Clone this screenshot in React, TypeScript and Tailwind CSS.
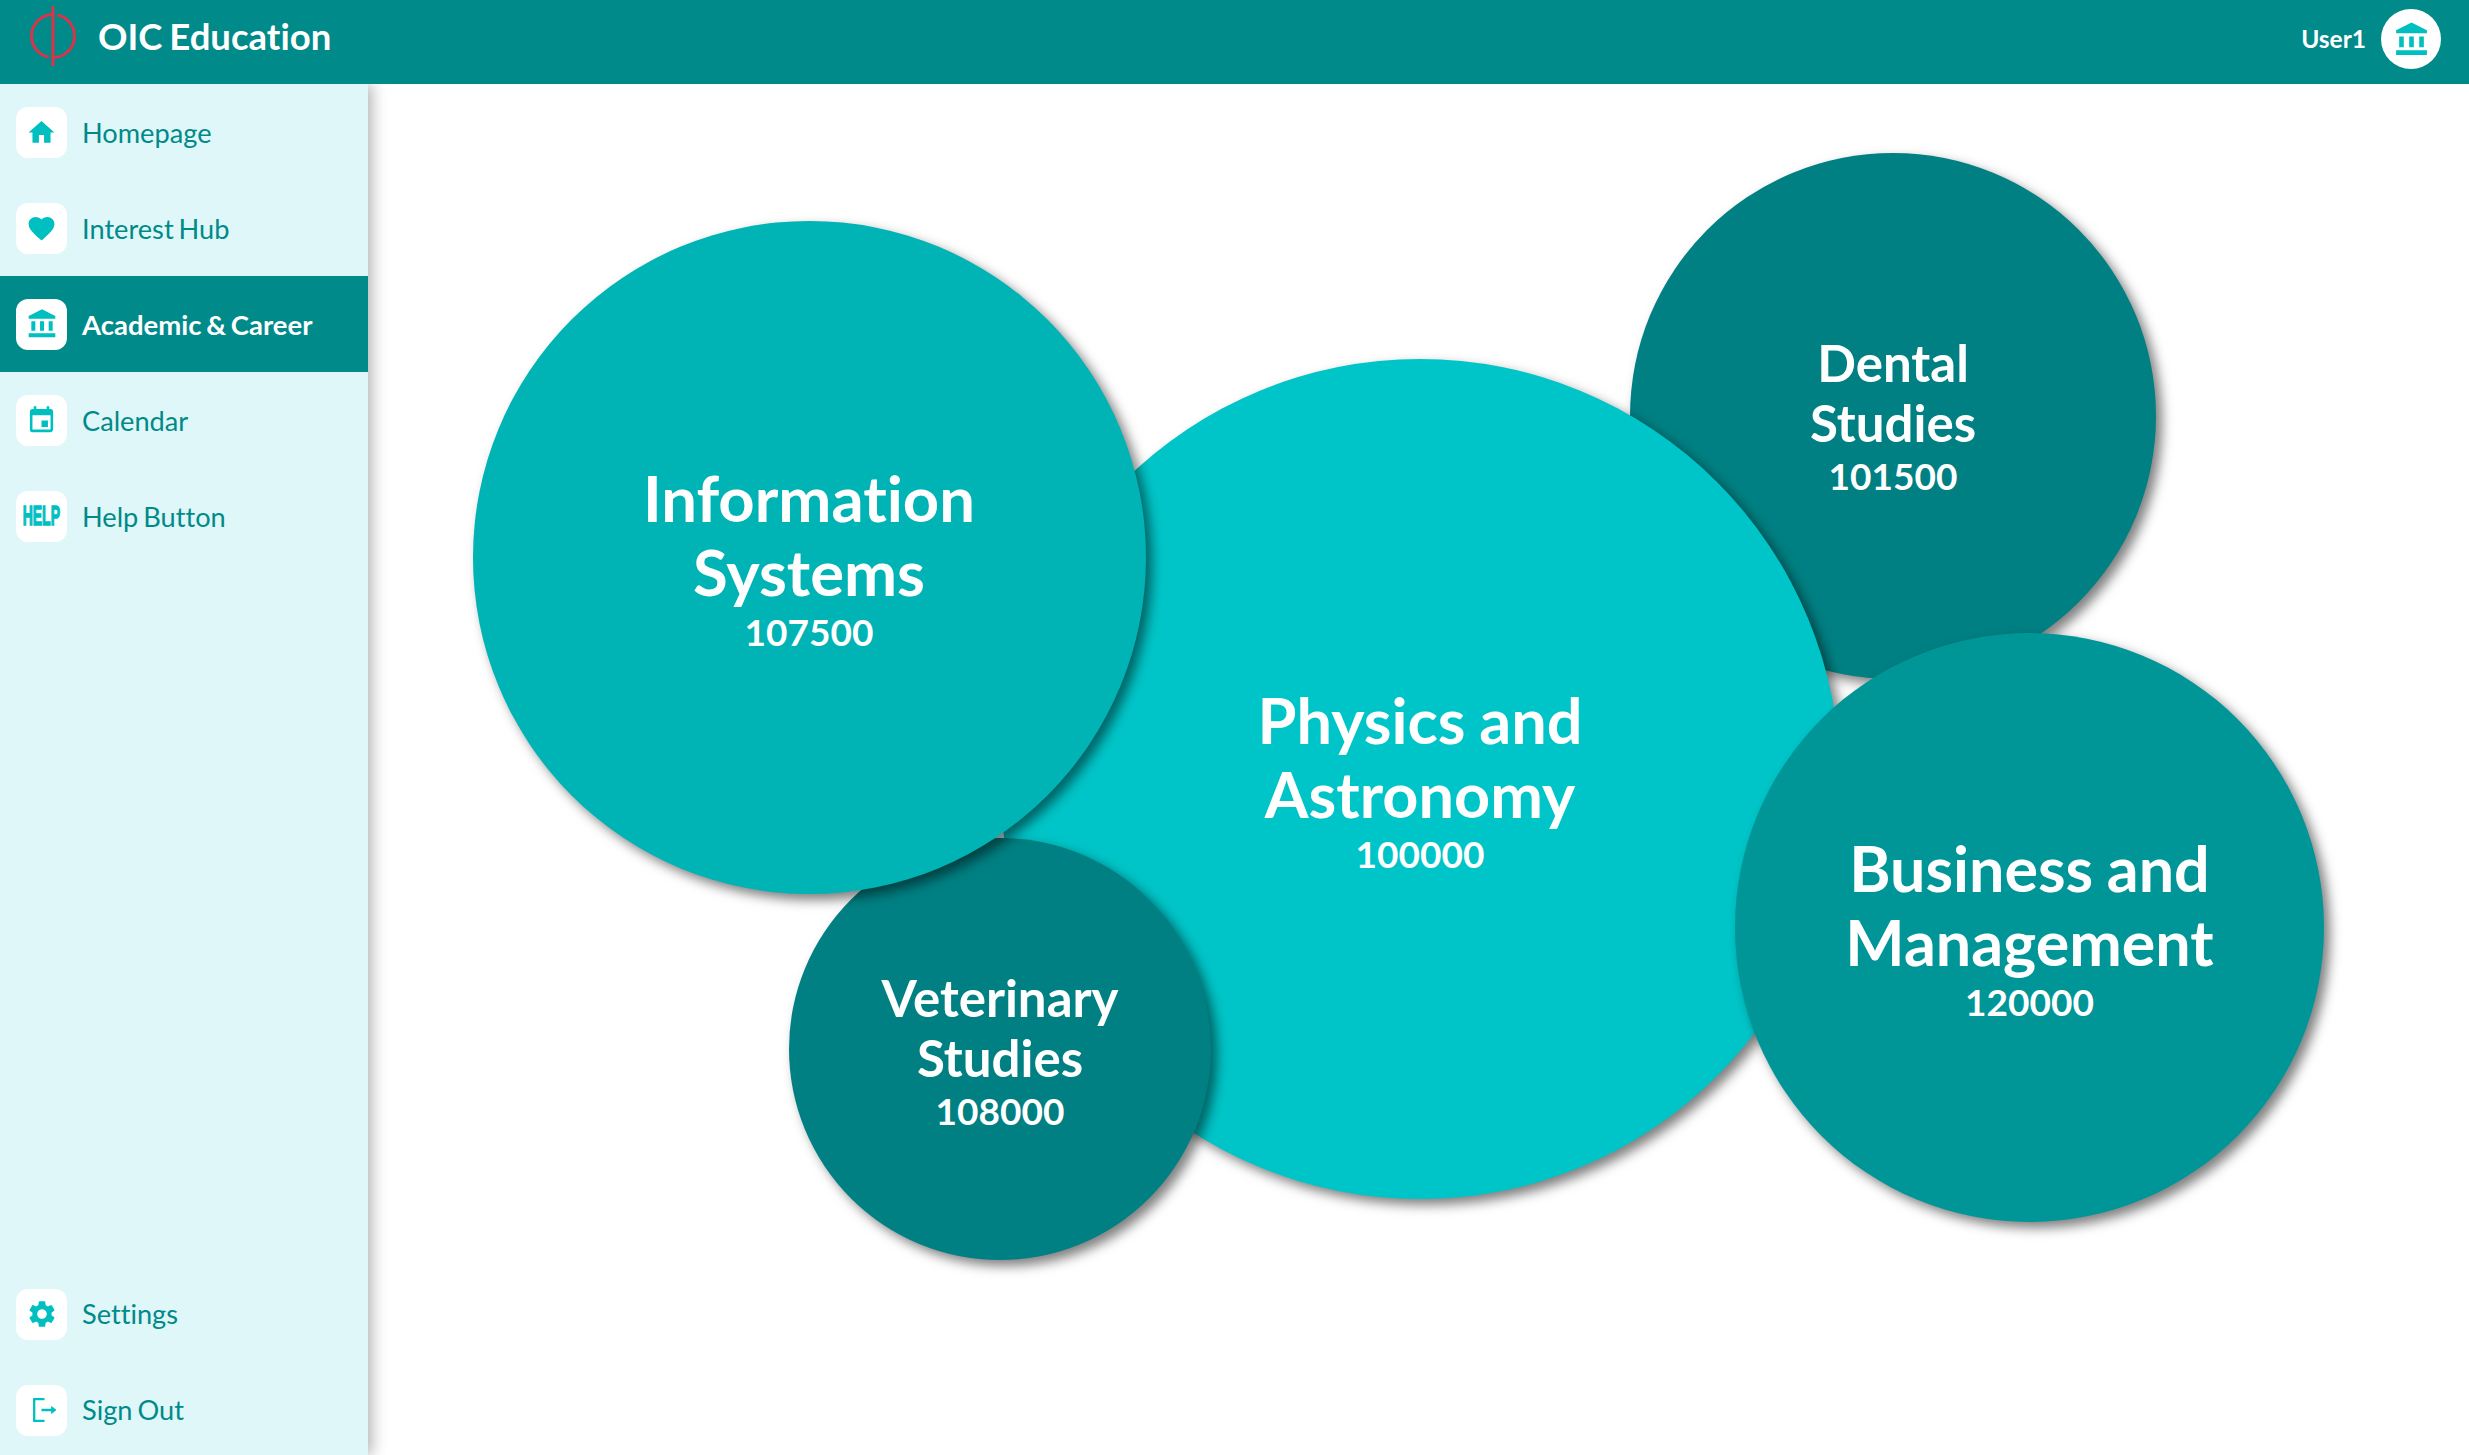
import React from "react";
import { MdHome, MdFavorite, MdAccountBalance, MdEvent, MdSettings } from "react-icons/md";

function SignOut() {
  return (
    <svg className="ml-[7px]" width="24" height="24" viewBox="0 0 24 24" fill="none" stroke="currentColor" strokeWidth="2.3">
      <path d="M11.5 1.2H1.2v21.6h10.3" />
      <path d="M8.5 12H20" />
      <path d="M18.5 8.5l4.5 3.5-4.5 3.5z" fill="currentColor" strokeWidth="0.8" />
    </svg>
  );
}

function Tile({ children }: { children: React.ReactNode }) {
  return (
    <div className="flex h-[51px] w-[51px] shrink-0 items-center justify-center overflow-hidden rounded-[12px] bg-white text-[#00bfc0]">
      {children}
    </div>
  );
}

function Item({ icon, label, active, low }: { icon: React.ReactNode; label: string; active?: boolean; low?: boolean }) {
  return (
    <div className={`flex h-[96px] items-center gap-[15px] pl-[16px] [word-spacing:-2px] ${active ? "bg-[#008a8a] text-[27.5px] font-bold text-white" : "text-[27.2px] text-[#008a8a]"}`}>
      <Tile>{icon}</Tile>
      <span className={low ? "" : "pt-[2px]"}>{label}</span>
    </div>
  );
}

function Bubble({ cls, title, value, titleCls }: { cls: string; title: string[]; value: string; titleCls: string }) {
  return (
    <div className={`absolute flex flex-col items-center justify-center rounded-full text-center font-bold text-white shadow-[6px_6px_12px_rgba(0,0,0,0.5)] [word-spacing:-0.1em] ${cls}`}>
      {title.map((t) => (
        <div key={t} className={titleCls}>{t}</div>
      ))}
      <div className="text-[37px] leading-[46px]">{value}</div>
    </div>
  );
}

export default function App() {
  return (
    <div className="flex h-[1455px] w-[2469px] flex-col overflow-hidden bg-white font-['Lato',sans-serif] [font-variant-ligatures:none]">
      <header className="relative z-20 flex h-[84px] shrink-0 items-center justify-between bg-[#008a8a] pb-[6px] pl-[30px] pr-[28px]">
        <div className="flex items-center gap-[22px]">
          <svg className="-mt-[7px]" width="46" height="60" viewBox="0 0 46 60" fill="none" strokeWidth="3">
            <circle cx="23" cy="30" r="21.5" stroke="#d9344a" />
            <path d="M26 4v6M20 50v6" stroke="#008a8a" />
            <path d="M23 0v60" stroke="#d9344a" />
          </svg>
          <span className="pb-[6px] text-[36.5px] font-bold text-white [word-spacing:-2px]">OIC Education</span>
        </div>
        <div className="flex items-center gap-[15px]">
          <span className="pt-[1px] text-[24.5px] font-bold text-white">User1</span>
          <div className="flex h-[60px] w-[60px] items-center justify-center rounded-full bg-white text-[#00bfc0]">
            <MdAccountBalance size={37} />
          </div>
        </div>
      </header>
      <div className="flex min-h-0 flex-1">
        <aside className="z-10 flex w-[368px] shrink-0 flex-col justify-between bg-[#dff7f8] shadow-[4px_0_14px_rgba(0,0,0,0.3)]">
          <nav>
            <Item icon={<MdHome size={31} />} label="Homepage" />
            <Item icon={<MdFavorite size={31} />} label="Interest Hub" />
            <Item icon={<MdAccountBalance size={32} />} label="Academic & Career" active />
            <Item icon={<MdEvent size={31} />} label="Calendar" />
            <Item
              icon={<span className="origin-center scale-x-[0.5] font-['Liberation_Sans',sans-serif] text-[28px] font-bold leading-none [-webkit-text-stroke:1.4px_#00bfc0]">HELP</span>}
              label="Help Button"
            />
          </nav>
          <nav className="-mb-[3px]">
            <Item icon={<MdSettings size={32} />} label="Settings" low />
            <Item icon={<SignOut />} label="Sign Out" low />
          </nav>
        </aside>
        <main className="relative flex-1">
          <Bubble cls="left-[1262px] top-[69px] h-[526px] w-[526px] bg-[#008083]" title={["Dental", "Studies"]} value="101500" titleCls="text-[51px] leading-[60px]" />
          <Bubble cls="left-[632px] top-[275px] h-[840px] w-[840px] pt-[2px] bg-[#00c5c8]" title={["Physics and", "Astronomy"]} value="100000" titleCls="text-[63px] leading-[74px]" />
          <Bubble cls="left-[1367px] top-[549px] h-[589px] w-[589px] bg-[#009698]" title={["Business and", "Management"]} value="120000" titleCls="text-[62.8px] leading-[74px]" />
          <Bubble cls="left-[421px] top-[754px] h-[422px] w-[422px] pt-[3px] bg-[#008083]" title={["Veterinary", "Studies"]} value="108000" titleCls="text-[51px] leading-[60px]" />
          <Bubble cls="left-[104.5px] top-[136.5px] h-[673px] w-[673px] pt-[2px] bg-[#00b3b5]" title={["Information", "Systems"]} value="107500" titleCls="text-[63.4px] leading-[74px]" />
        </main>
      </div>
    </div>
  );
}
